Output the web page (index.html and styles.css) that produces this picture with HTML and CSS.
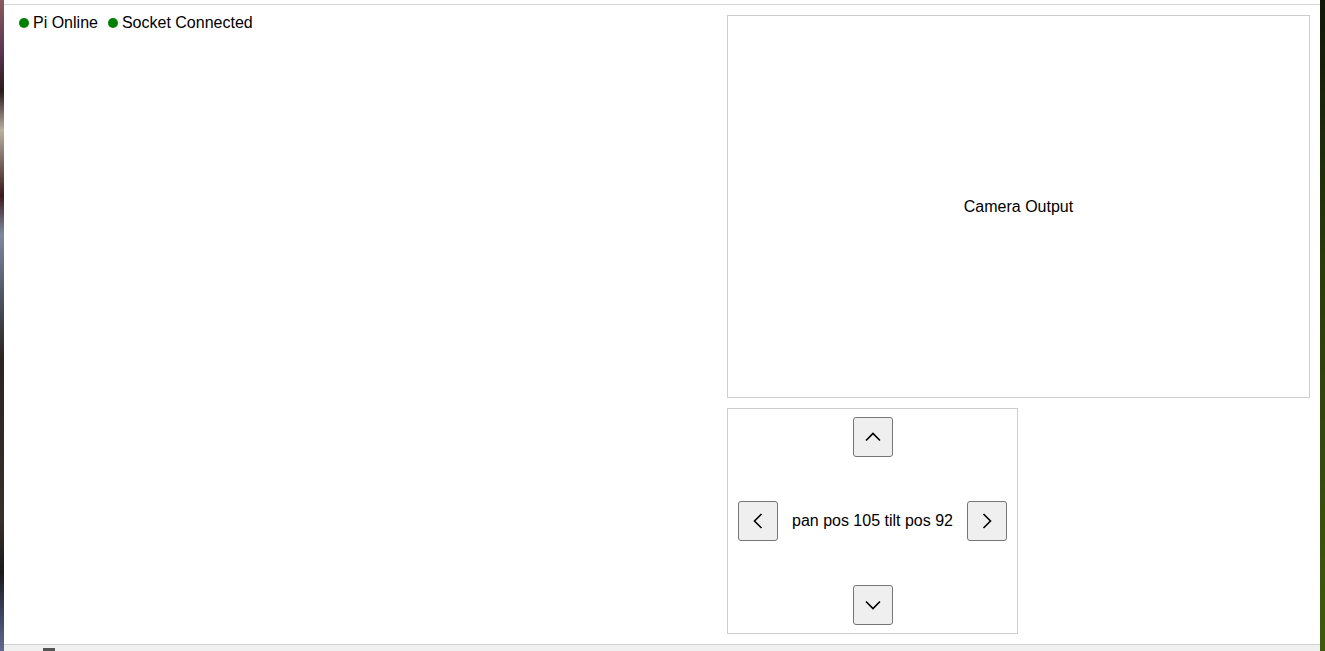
FILE: index.html
```html
<!DOCTYPE html>
<html lang="en">
<head>
  <meta charset="UTF-8" />
  <meta name="viewport" content="width=device-width, initial-scale=1" />
  <title>Pi Camera</title>
  <link rel="stylesheet" href="styles.css">
</head>
<body>
  <div class="desk-left"></div>

  <div class="window">
    <div class="page">
      <div class="left-col">
        <div class="status-bar">
          <span class="status"><span class="dot"></span>Pi Online</span>
          <span class="status"><span class="dot"></span>Socket Connected</span>
        </div>
      </div>

      <div class="right-col">
        <div class="camera">Camera Output</div>

        <div class="controls">
          <button class="btn up" aria-label="tilt up">
            <svg width="20" height="20" viewBox="0 0 20 20"><path d="M3 13.5 L10 6.5 L17 13.5" /></svg>
          </button>
          <button class="btn left" aria-label="pan left">
            <svg width="20" height="20" viewBox="0 0 20 20"><path d="M13.5 3 L6.5 10 L13.5 17" /></svg>
          </button>
          <div class="position">pan pos 105 tilt pos 92</div>
          <button class="btn right" aria-label="pan right">
            <svg width="20" height="20" viewBox="0 0 20 20"><path d="M6.5 3 L13.5 10 L6.5 17" /></svg>
          </button>
          <button class="btn down" aria-label="tilt down">
            <svg width="20" height="20" viewBox="0 0 20 20"><path d="M3 6.5 L10 13.5 L17 6.5" /></svg>
          </button>
        </div>
      </div>
    </div>

    <div class="bottom-bar"><span class="tab-mark"></span></div>
  </div>

  <div class="desk-right"></div>
</body>
</html>
```

FILE: styles.css
```css
body, html {
  margin: 0;
  padding: 0;
  height: 100%;
  overflow: hidden;
}

body {
  display: flex;
  font-family: 'Liberation Sans', Arial, sans-serif;
  font-size: 16px;
  color: #000;
}

.desk-left {
  width: 4px;
  background: linear-gradient(to bottom, #8a5a60 0%, #5a3550 8%, #2a1a1a 14%, #b9b0a0 20%, #3a1a1a 30%, #8088a0 36%, #505868 45%, #2a2420 55%, #35302a 80%, #1a1a1a 88%, #404868 95%, #606890 100%);
}

.desk-right {
  width: 5px;
  background: linear-gradient(to bottom, #101808 0%, #2a3a0a 40%, #3f5a10 100%);
}

.window {
  flex: 1;
  display: flex;
  flex-direction: column;
  background: #fff;
  padding-top: 4px;
}

.page {
  flex: 1;
  display: flex;
  gap: 10px;
  padding: 10px;
  border-top: 1px solid #d5d5d5;
}

.left-col {
  flex: 1;
}

.status-bar {
  display: flex;
  gap: 10px;
  padding-left: 5px;
  margin-top: -1px;
  line-height: 18px;
}

.status {
  display: flex;
  align-items: center;
}

.dot {
  width: 10px;
  height: 10px;
  border-radius: 50%;
  background: #008000;
  margin-right: 4px;
}

.right-col {
  width: 583px;
  display: flex;
  flex-direction: column;
  gap: 10px;
}

.camera {
  height: 383px;
  box-sizing: border-box;
  border: 1px solid #ccc;
  display: flex;
  align-items: center;
  justify-content: center;
}

.controls {
  width: 291px;
  height: 226px;
  box-sizing: border-box;
  border: 1px solid #ccc;
  padding: 8px 10px;
  display: grid;
  grid-template-columns: 40px 1fr 40px;
  grid-template-rows: 40px 1fr 40px;
  align-items: center;
}

.btn {
  width: 40px;
  height: 40px;
  padding: 0;
  box-sizing: border-box;
  border: 1px solid #767676;
  border-radius: 3px;
  background: #efefef;
  display: flex;
  align-items: center;
  justify-content: center;
}

.btn svg path {
  fill: none;
  stroke: #000;
  stroke-width: 1.6;
}

.up {
  grid-column: 2;
  grid-row: 1;
  justify-self: center;
}

.left {
  grid-column: 1;
  grid-row: 2;
}

.position {
  grid-column: 2;
  grid-row: 2;
  text-align: center;
  margin-top: -1px;
}

.right {
  grid-column: 3;
  grid-row: 2;
}

.down {
  grid-column: 2;
  grid-row: 3;
  justify-self: center;
}

.bottom-bar {
  height: 6px;
  background: #f0f0f0;
  border-top: 1px solid #d0d0d0;
  position: relative;
}

.tab-mark {
  position: absolute;
  left: 39px;
  top: 3px;
  width: 12px;
  height: 3px;
  background: #555;
}
```
